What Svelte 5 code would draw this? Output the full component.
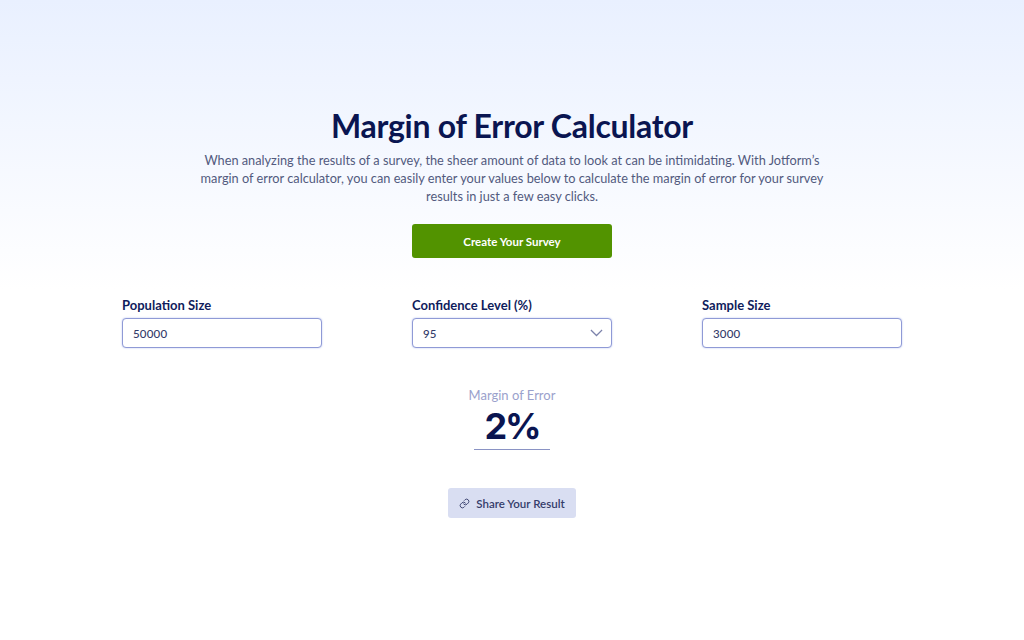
<script>
  let population = $state('50000');
  let confidence = $state('95');
  let sample = $state('3000');
</script>

<main class="page">
  <section class="hero">
    <h1>Margin of Error Calculator</h1>
    <p>When analyzing the results of a survey, the sheer amount of data to look at can be intimidating. With Jotform’s margin of error calculator, you can easily enter your values below to calculate the margin of error for your survey results in just a few easy clicks.</p>
    <button class="cta">Create Your Survey</button>
  </section>

  <section class="fields">
    <label class="field">
      <span>Population Size</span>
      <input bind:value={population} />
    </label>
    <label class="field">
      <span>Confidence Level (%)</span>
      <div class="select-wrap">
        <select bind:value={confidence}>
          <option>90</option>
          <option>95</option>
          <option>99</option>
        </select>
        <svg class="chev" viewBox="0 0 14 8" width="13" height="7.5" fill="none" stroke="#7c83ab" stroke-width="1.3"><path d="M1 1l6 6 6-6"/></svg>
      </div>
    </label>
    <label class="field">
      <span>Sample Size</span>
      <input bind:value={sample} />
    </label>
  </section>

  <section class="result">
    <div class="r-label">Margin of Error</div>
    <div class="r-value">2%</div>
    <button class="share">
      <svg viewBox="0 0 24 24" width="11" height="11" fill="none" stroke="#343c6a" stroke-width="2" stroke-linecap="round" stroke-linejoin="round"><path d="M10 13a5 5 0 0 0 7.5.5l3-3a5 5 0 0 0-7-7l-1.7 1.7"/><path d="M14 11a5 5 0 0 0-7.5-.5l-3 3a5 5 0 0 0 7 7l1.7-1.7"/></svg>
      Share Your Result
    </button>
  </section>
</main>

<style>
  :global(body) { margin: 0; background: #fff; }
  .page {
    height: 640px;
    box-sizing: border-box;
    font-family: Lato, Inter, sans-serif;
    color: #0a1551;
    background: linear-gradient(180deg, #e9f0ff 0, #ffffff 290px);
    background-repeat: no-repeat;
    overflow: hidden;
  }
  .hero { display: flex; flex-direction: column; align-items: center; padding-top: 106px; }
  h1 { margin: 0; font-size: 32px; line-height: 40px; font-weight: 700; letter-spacing: -0.27px; }
  p { margin: 5px 0 0; width: 640px; text-align: center; font-size: 12.75px; line-height: 18px; color: #525a7e; }
  .cta {
    margin-top: 19px; width: 200px; height: 34px; border: 0; border-radius: 3px;
    background: #529300; color: #fff; font: 700 11.5px Lato, sans-serif;
  }
  .fields { display: flex; justify-content: space-between; width: 780px; margin: 39px auto 0; }
  .field { display: flex; flex-direction: column; gap: 5px; width: 200px; }
  .field > span { font-size: 13px; line-height: 16px; font-weight: 700; color: #0f1c5c; }
  input, select {
    width: 100%; height: 30px; box-sizing: border-box; padding: 0 10px;
    border: 1px solid #8f9ad6; border-radius: 4px; background: #fff; color: #343c6a;
    font: 500 11.5px Lato, sans-serif; letter-spacing: 0.2px; outline: none; appearance: none;
    box-shadow: 0 0 2px #b6c0ee;
  }
  .select-wrap { position: relative; }
  .chev { position: absolute; right: 9px; top: 11px; pointer-events: none; }
  .result { display: flex; flex-direction: column; align-items: center; margin-top: 39px; }
  .r-label { font-size: 13px; line-height: 16px; color: #9aa1cc; }
  .r-value {
    width: 76px; text-align: center; font-family: Inter, sans-serif; font-size: 36px; line-height: 40px; font-weight: 700; letter-spacing: -2px;
    border-bottom: 1px solid #8a93c4; padding-bottom: 3px; margin-top: 3px;
  }
  .share {
    display: flex; align-items: center; justify-content: center; gap: 6px;
    margin-top: 38px; width: 128px; height: 30px; border: 0; border-radius: 3px;
    background: #d9def2; color: #343c6a; font: 600 11.5px Lato, sans-serif;
  }
</style>
